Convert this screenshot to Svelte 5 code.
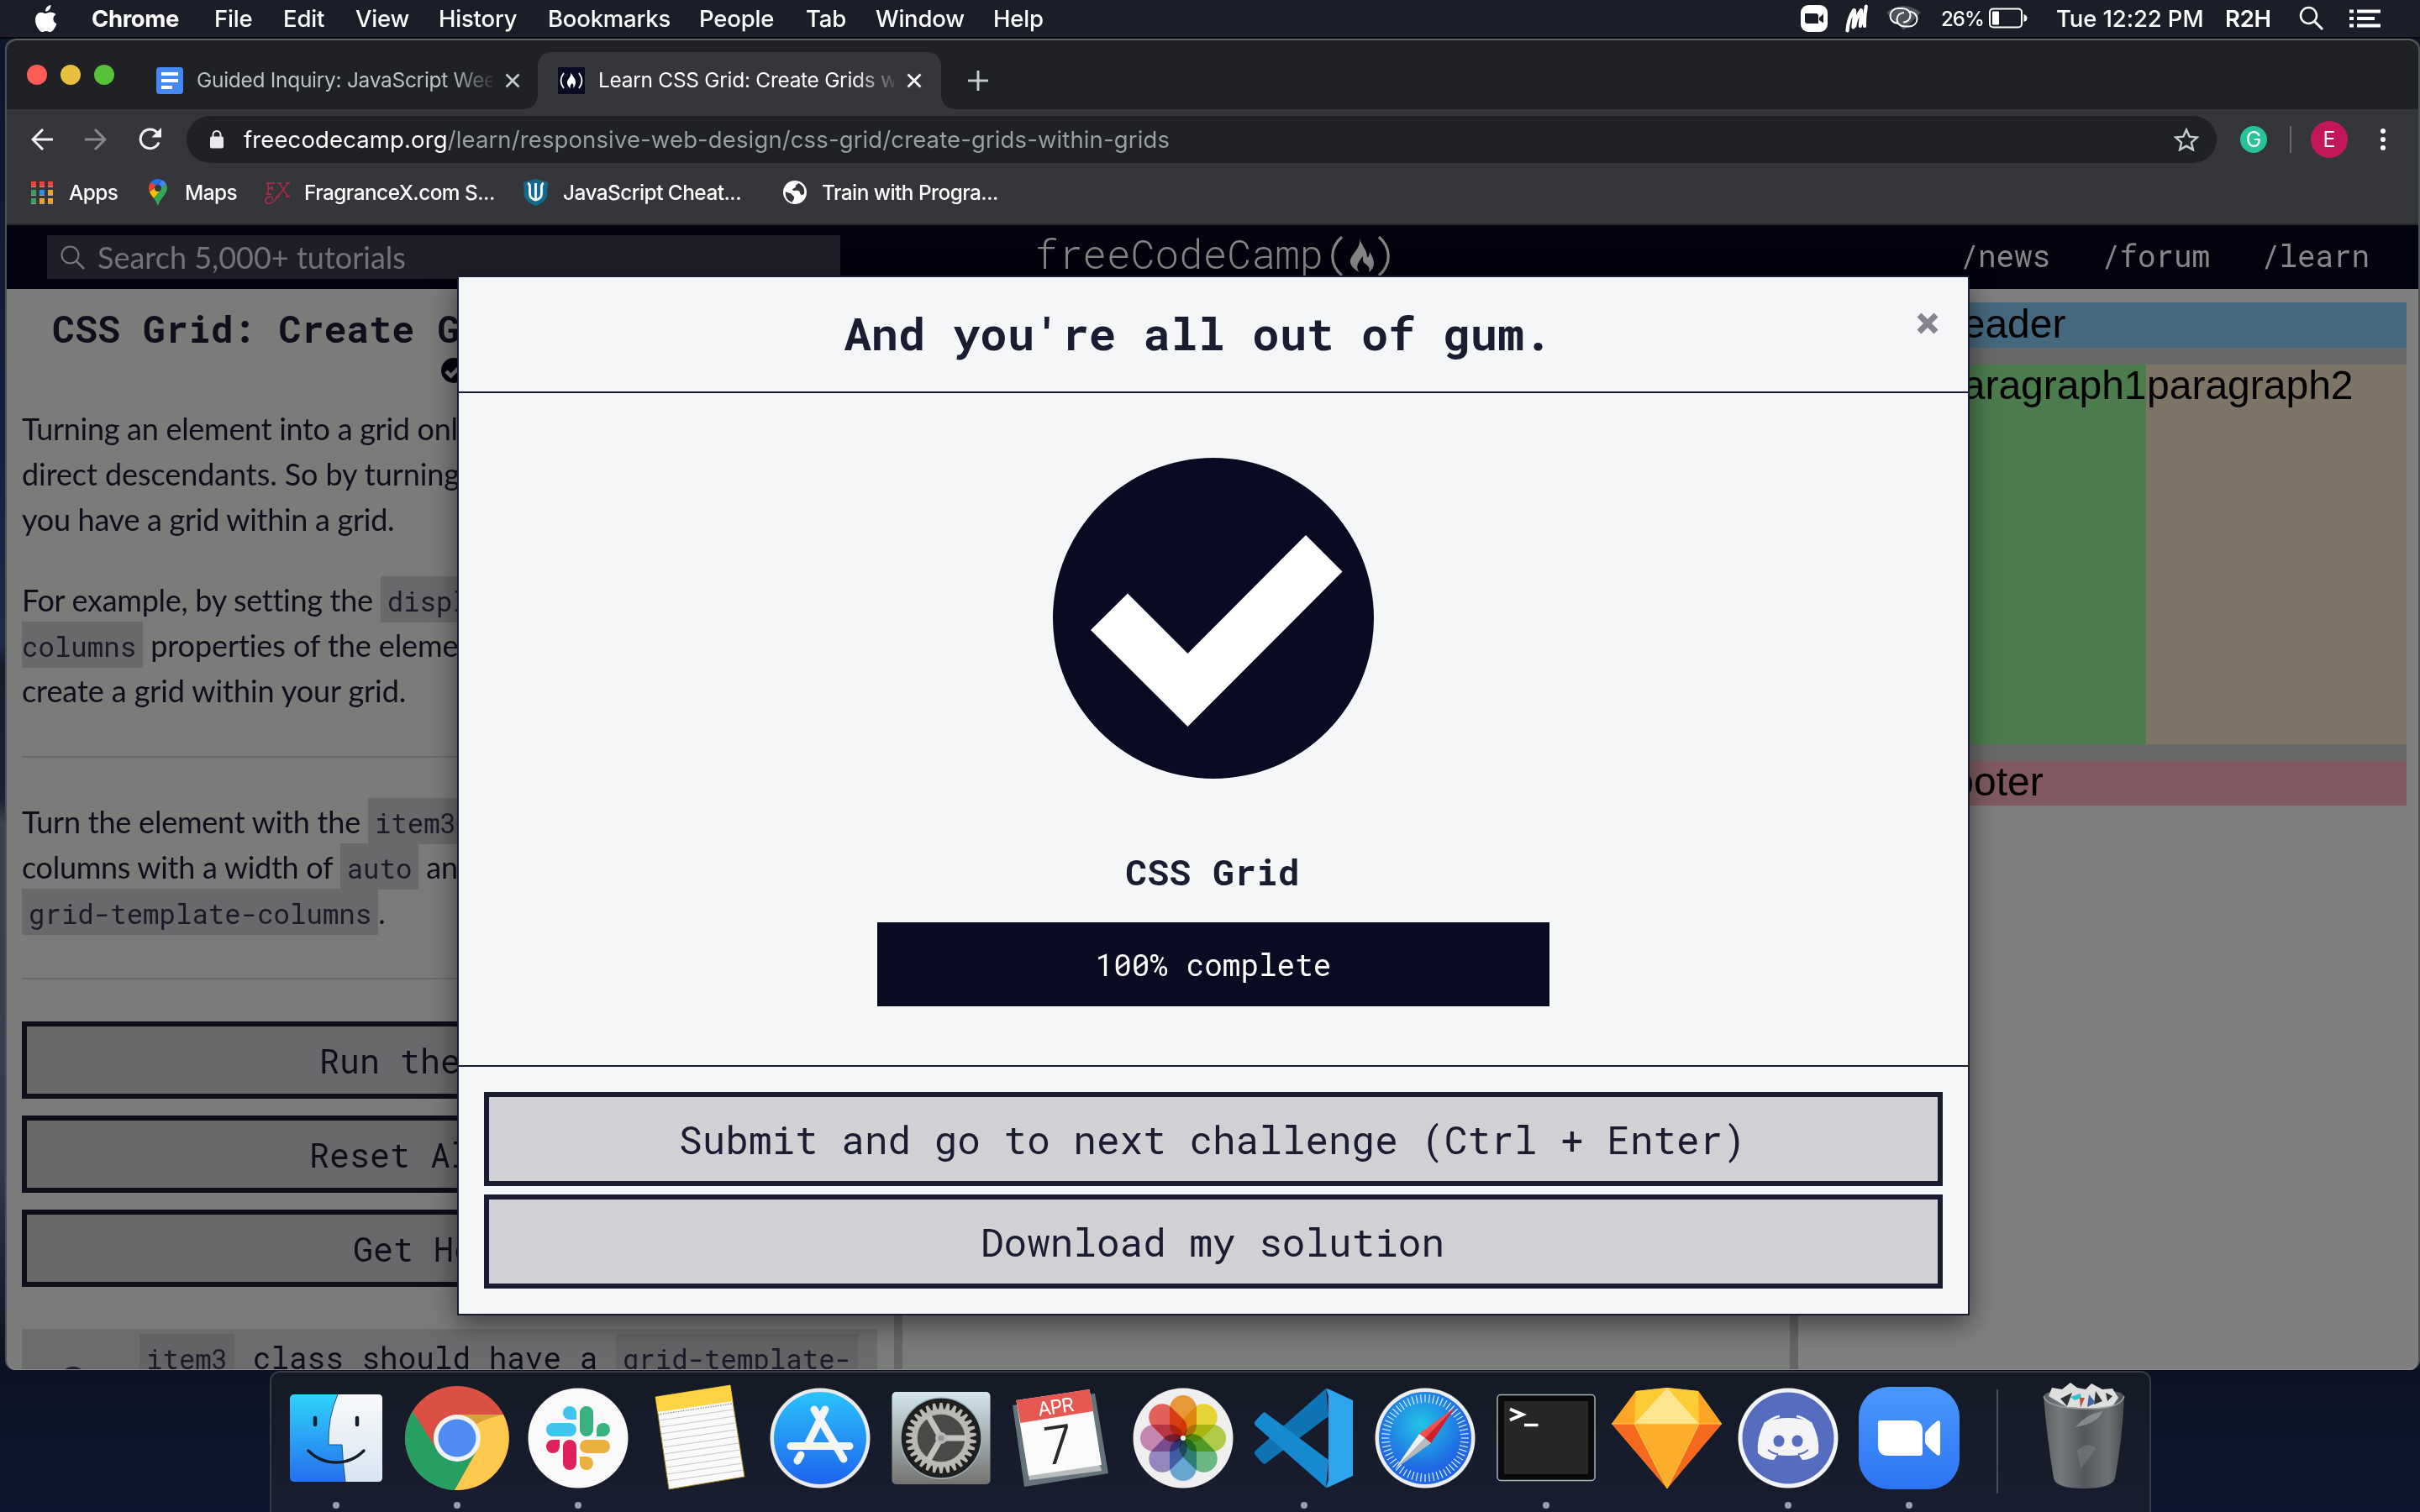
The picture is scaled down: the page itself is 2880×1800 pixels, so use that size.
<script>
  const menus = ['File', 'Edit', 'View', 'History', 'Bookmarks', 'People', 'Tab', 'Window', 'Help'];
  const gearTeeth = Array.from({ length: 30 }, (_, i) => i * 12);
  const ticks = Array.from({ length: 60 }, (_, i) => ({ angle: i * 6, len: i % 5 === 0 ? 9 : 10 }));
  const noteLines = [0, 1, 2, 3, 4, 5, 6, 7, 8, 9];
  const petals = [
    { angle: 0, color: '#f7a23b' },
    { angle: 45, color: '#f6e13a' },
    { angle: 90, color: '#bcd84f' },
    { angle: 135, color: '#72c28c' },
    { angle: 180, color: '#6fb1e0' },
    { angle: 225, color: '#9f8fca' },
    { angle: 270, color: '#cf8fbd' },
    { angle: 315, color: '#f0665e' }
  ];
  const appDots = [
    ['#f44336', '#f44336', '#f44336'],
    ['#3a9f5c', '#2b8df0', '#f0a024'],
    ['#3a9f5c', '#f0a024', '#f0a024']
  ];
  const dock = [
    { name: 'finder', running: true },
    { name: 'chrome', running: true },
    { name: 'slack', running: true },
    { name: 'notes', running: false },
    { name: 'appstore', running: false },
    { name: 'settings', running: false },
    { name: 'calendar', running: false },
    { name: 'photos', running: false },
    { name: 'vscode', running: true },
    { name: 'safari', running: false },
    { name: 'terminal', running: true },
    { name: 'sketch', running: false },
    { name: 'discord', running: true },
    { name: 'zoom', running: true }
  ];
</script>

<div class="desktop">
  <header class="menubar">
    <svg class="apple" viewBox="0 0 28 34"><path d="M20.500 1c.2 2-.6 3.900-1.700 5.300-1.200 1.400-3 2.400-4.700 2.300-.2-1.900.7-3.900 1.800-5.100C17.100 2.100 19 1.100 20.500 1zM26.500 12.300c-1.900 1.200-3.100 3-3.100 5.300 0 2.700 1.600 4.800 4 5.700-.8 2.600-2.100 5-3.800 7.200-1.100 1.500-2.300 2.500-3.900 2.500-1.700 0-2.400-1.100-4.700-1.100s-3.100 1.100-4.800 1.100c-1.600 0-2.900-1.200-4.100-2.900C3.600 26.700 2 22.800 2 18.700c0-5.700 3.500-9 7.200-9 2 0 3.800 1.400 5.100 1.400 1.200 0 3.300-1.500 5.800-1.500 2.500.1 4.900 1 6.400 2.700z" fill="#fff"/></svg>
    <b>Chrome</b>
    {#each menus as m}<span>{m}</span>{/each}
    <div class="status">
      <svg width="32" height="32" viewBox="0 0 32 32"><rect width="32" height="32" rx="9" fill="#fff"/><path d="M5 10h13q3 0 3 3v9H8q-3 0-3-3zM22 15l5-4.500v11L22 18z" fill="#1b1e29"/></svg>
      <svg width="30" height="36" viewBox="0 0 30 36"><path d="M3.500 32.500Q4.500 18 11 8.500 12.500 7 12 12L10.500 28.500 M12.200 27Q14 16 19.500 8.500 20.500 7 20 12L18.800 27 M20 24Q25 15 25.800 3.500Q23.500 18 24 27" fill="none" stroke="#fff" stroke-width="4.200" stroke-linecap="round" stroke-linejoin="round"/></svg>
      <svg width="42" height="32" viewBox="0 0 42 32"><path d="M0 9Q20 -7 41 9L20.500 30z" fill="#50535c"/><g fill="none" stroke="#fff" stroke-width="2"><path d="M15 22C8 22 4.500 17 4.500 13 4.500 8 8.500 4 14 4h5c6 0 9.500 4 9.500 8.500 0 4.500-4 8-8.500 8"/><path d="M26 7.500c6 0 10.500 4 10.500 9 0 5-4 9-9.500 9h-5c-6 0-9.500-4-9.500-8.500 0-4.500 4-8 8.500-8"/></g></svg>
      <span class="pct">26%</span>
      <svg width="46" height="26" viewBox="0 0 46 26"><rect x="1" y="1.500" width="38" height="22" rx="4" fill="none" stroke="#fff" stroke-width="2"/><rect x="4" y="4.500" width="8" height="16" rx="1" fill="#fff"/><path d="M41.500 8q4 1 4 4.500t-4 4.500z" fill="#fff"/></svg>
      <span class="clock">Tue 12:22 PM</span>
      <span class="user">R2H</span>
      <svg width="30" height="30" viewBox="0 0 30 30"><circle cx="11.500" cy="11.500" r="9.500" fill="none" stroke="#fff" stroke-width="2.500"/><path d="M18.500 18.500L28 28" stroke="#fff" stroke-width="3"/></svg>
      <svg width="37" height="22" viewBox="0 0 37 22"><path d="M0 2.500h5M9 2.500h28M0 11h5M9 11h21M0 19.500h5M9 19.500h28" stroke="#fff" stroke-width="4"/></svg>
    </div>
  </header>

  <section class="window">
    <div class="tabstrip">
      <div class="lights"><i class="red"></i><i class="yellow"></i><i class="green"></i></div>
      <div class="tab idle">
        <svg width="32" height="32" viewBox="0 0 32 32"><rect width="32" height="32" rx="4" fill="#4688f4"/><path d="M6 8h20M6 16h20M6 24h13" stroke="#fff" stroke-width="4"/></svg>
        <span class="tabtext">Guided Inquiry: JavaScript Wee</span>
        <svg class="x" viewBox="0 0 18 18"><path d="M1.500 1.500l15 15M16.500 1.500l-15 15" stroke="#c5c8cc" stroke-width="2.800"/></svg>
      </div>
      <div class="tab active">
        <svg width="32" height="32" viewBox="0 0 32 32"><rect width="32" height="32" fill="#0a0a23"/><path d="M7 7q-7 9 0 18M25 7q7 9 0 18" fill="none" stroke="#fff" stroke-width="1.800"/><path d="M15.500 6c2 6 5.500 7 5.500 12 0 3-1 5-3 7 1-3 0-5-1-6-2 2-3 3-2 6-3-2-4-4-4-7 0-4 5-6 4.500-12z" fill="#fff"/></svg>
        <span class="tabtext">Learn CSS Grid: Create Grids w</span>
        <svg class="x" viewBox="0 0 18 18"><path d="M1.500 1.500l15 15M16.500 1.500l-15 15" stroke="#fff" stroke-width="2.800"/></svg>
      </div>
      <svg class="plus" viewBox="0 0 24 24"><path d="M12 0v24M0 12h24" stroke="#c5c8cc" stroke-width="3"/></svg>
    </div>

    <div class="toolbar">
      <svg class="nav" viewBox="0 0 26 26"><path d="M26 13H2M14 1L2 13l12 12" fill="none" stroke="#f1f3f4" stroke-width="3"/></svg>
      <svg class="nav" viewBox="0 0 26 26"><path d="M0 13h24M12 1l12 12-12 12" fill="none" stroke="#87898c" stroke-width="3"/></svg>
      <svg class="nav reload" viewBox="0 0 28 28"><path d="M24 17.500A11.300 11.300 0 1 1 22 6" fill="none" stroke="#f1f3f4" stroke-width="3"/><path d="M27 0v11.500H15.500z" fill="#f1f3f4"/></svg>
      <div class="omnibox">
        <svg class="lock" viewBox="0 0 16 22"><path d="M3.500 9V5.500a4.500 4.500 0 0 1 9 0V9" fill="none" stroke="#e8eaed" stroke-width="2"/><rect y="7.500" width="16" height="14" rx="2" fill="#e8eaed"/></svg>
        <span class="url"><em>freecodecamp.org</em>/learn/responsive-web-design/css-grid/create-grids-within-grids</span>
        <svg class="star" viewBox="0 0 30 28"><path d="M15 2.500l3.700 8.200 9 .9-6.800 6 2 8.800L15 21.800l-7.900 4.600 2-8.800-6.800-6 9-.9z" fill="none" stroke="#c5c8cc" stroke-width="2.500"/></svg>
      </div>
      <div class="grammarly">G</div>
      <div class="sep"></div>
      <div class="avatar">E</div>
      <svg class="dots" viewBox="0 0 6 26"><circle cx="3" cy="3" r="3" fill="#fff"/><circle cx="3" cy="13" r="3" fill="#fff"/><circle cx="3" cy="23" r="3" fill="#fff"/></svg>
    </div>

    <div class="bookmarks">
      <svg width="26" height="27" viewBox="0 0 26 27">
        {#each appDots as row, r}{#each row as c, i}<rect x={i * 10} y={r * 10} width="6" height="6" fill={c}/><rect x={i * 10} y={r * 10 + 6} width="6" height="1" fill="#a0a0a0"/>{/each}{/each}
      </svg>
      <span>Apps</span>
      <svg class="pin" width="22" height="32" viewBox="0 0 22 32"><path d="M11 0A11 11 0 0 0 2.600 4L8 9l8-7.500A11 11 0 0 0 11 0z" fill="#1a73e8"/><path d="M16 1.200L8 11l7 1 6-6a11 11 0 0 0-5-4.800z" fill="#4285f4"/><path d="M2.600 4A11 11 0 0 0 1 15.500L9 8z" fill="#ea4335"/><path d="M1 15.500c1 2.500 3 5 5 7.500L17 12 9 9z" fill="#fbbc04"/><path d="M21 6c2 5 1 9-3 14-3 4-5 6-7 12-2-5-3-6-5-9L18 8z" fill="#34a853"/><circle cx="11" cy="11" r="4" fill="#35363a"/></svg>
      <span>Maps</span>
      <svg width="32" height="27" viewBox="0 0 32 27"><path d="M3 2h10M5 2v13M2.500 15h6M5 8h6M10 5.500v5M16 2h5M26 2h5M14 18h5M26 18h5M18.500 2l10 16M29 2L15 20C9 29 1 27 2 22c1-5 10-5 8 0" fill="none" stroke="#a02c48" stroke-width="1.800"/></svg>
      <span>FragranceX.com S...</span>
      <svg width="31" height="32" viewBox="0 0 31 32"><path d="M15.500 0L30 4l-1 17q-4 8-13.500 11Q6 29 2 21L1 4z" fill="#14698e"/><path d="M6 5q2.500 1 2.500 4v8q0 7 7 8 7-1 7-8V9q0-3 2.500-4M15.500 5v20" fill="none" stroke="#fff" stroke-width="2.800"/></svg>
      <span>JavaScript Cheat...</span>
      <svg width="30" height="30" viewBox="0 0 30 30"><circle cx="15" cy="15" r="14" fill="#fff"/><path d="M4 14c2 2 5 1 7 3 1 2 4 2 3 5 0 2-2 2-2 5-6-2-9-7-8-13zM19 4c-1 2-4 2-3 4 0 2-4 2-4 4 2 2 5 0 7 1 3 1 1 4 4 5 2 0 3-1 3-2 1-6-2-10-7-12z" fill="#35363a"/></svg>
      <span>Train with Progra...</span>
    </div>

    <nav class="site">
      <div class="search">
        <svg width="29" height="29" viewBox="0 0 29 29"><circle cx="11.500" cy="11.500" r="10" fill="none" stroke="#77777b" stroke-width="2"/><path d="M19 19l9 9" stroke="#77777b" stroke-width="2.500"/></svg>
        <span>Search 5,000+ tutorials</span>
      </div>
      <div class="logo">
        <span>freeCodeCamp</span>
        <svg width="74" height="48" viewBox="0 0 74 48"><path d="M16 1C1 14 1 34 16 47M60 1c15 13 15 33 0 46" fill="none" stroke="#858585" stroke-width="3.200"/><path d="M37 3c2 8 9 13 9 22q2 1 3-6c3 5 5 9 5 14 0 4-3 8-6 10 1-4 1-6-4-10-4-2-3-6-3-9-5 6-10 13-4 19-6-3-12-8-11-14 1-7 13-15 11-26z" fill="#858585"/></svg>
      </div>
      <div class="links"><span>/news</span><span>/forum</span><span>/learn</span></div>
    </nav>

    <main class="page">
      <section class="lesson">
        <h1>CSS Grid: Create Grids within</h1>
        <svg class="done" viewBox="0 0 30 30"><circle cx="15" cy="15" r="15" fill="#05050f"/><path d="M6 16l5.500 5.500L23 10" fill="none" stroke="#7b7d7b" stroke-width="4.500"/></svg>
        <div class="para">
          <p class="tight">Turning an element into a grid only</p>
          <p>direct descendants. So by turning a</p>
          <p class="tight">you have a grid within a grid.</p>
        </div>
        <div class="para">
          <p class="tight">For example, by setting the <code>display</code></p>
          <p><code class="cont">columns</code> properties of the element</p>
          <p>create a grid within your grid.</p>
        </div>
        <hr />
        <div class="para">
          <p class="snug">Turn the element with the <code>item3</code></p>
          <p class="tight">columns with a width of <code>auto</code> and</p>
          <p><code>grid-template-columns</code>.</p>
        </div>
        <hr />
        <div class="actions">
          <div class="btn">Run the Tests</div>
          <div class="btn">Reset All Code</div>
          <div class="btn help">Get Help</div>
        </div>
        <div class="result">
          <svg width="34" height="34" viewBox="0 0 34 34"><circle cx="17" cy="17" r="17" fill="#1c1c28"/></svg>
          <p><code>item3</code> class should have a <code>grid-template-</code></p>
        </div>
      </section>
      <div class="gutter"></div>
      <section class="editor"></section>
      <div class="gutter"></div>
      <section class="preview">
        <div class="grid">
          <div class="cell head"><span>header</span></div>
          <div class="cell p1"><span>paragraph1</span></div>
          <div class="cell p2"><span>paragraph2</span></div>
          <div class="cell foot"><span>footer</span></div>
        </div>
      </section>
    </main>

    <div class="modal">
      <div class="mhead">
        <h2>And you're all out of gum.</h2>
        <svg viewBox="0 0 26 26"><path d="M3 3l20 20M23 3L3 23" stroke="#858591" stroke-width="7"/></svg>
      </div>
      <div class="mbody">
        <svg class="check" viewBox="0 0 382 382"><circle cx="191" cy="191" r="191" fill="#0a0a23"/><path d="M45 205l44-43.500L160.500 233 301 92l43.500 43.500L160.500 320z" fill="#fff"/></svg>
        <h3>CSS Grid</h3>
        <div class="progress">100% complete</div>
      </div>
      <div class="mfoot">
        <div class="mbtn">Submit and go to next challenge (Ctrl + Enter)</div>
        <div class="mbtn">Download my solution</div>
      </div>
    </div>
  </section>

  <footer class="dock">
    {#each dock as app}
      <div class="slot">
        <svg viewBox="-72 -72 144 144">
          {#if app.name === 'finder'}
            <defs>
              <linearGradient id="fa" x2="0" y2="1"><stop stop-color="#2fd3fb"/><stop offset="1" stop-color="#2470ee"/></linearGradient>
              <linearGradient id="fb" x2="0" y2="1"><stop stop-color="#f8f8f9"/><stop offset="1" stop-color="#d8e6f3"/></linearGradient>
            </defs>
            <rect x="-55" y="-52" width="110" height="104" rx="5" fill="url(#fa)"/>
            <path d="M2 -52H50q5 0 5 5V47q0 5 -5 5H11Q8 30 7 8H-9Q-10 -25 2 -52z" fill="url(#fb)"/>
            <path d="M2 -52Q-10 -25 -9 8H7Q8 30 11 52" fill="none" stroke="#1d4f91" stroke-width="1"/>
            <path d="M-25 -24v8M25 -24v8" stroke="#16202c" stroke-width="4.500" stroke-linecap="round"/>
            <path d="M-33 15Q-19 29 0 29T33 15" fill="none" stroke="#16202c" stroke-width="3.500" stroke-linecap="round"/>
          {:else if app.name === 'chrome'}
            <circle r="62" fill="#dc4f44"/>
            <path d="M-53 -32A62 62 0 0 0 -3 62L24 14 -24 14z" fill="#26a062"/>
            <path d="M55 -28A62 62 0 0 1 -3 62L24 14 12 -28z" fill="#fdca4e"/>
            <path d="M0 -28H55Q35 -24 20 -15z" fill="#d9a03c"/>
            <circle r="28" fill="#f3f3f3"/><circle r="22.500" fill="#4f8df2"/>
          {:else if app.name === 'slack'}
            <circle r="59.500" fill="#f9f9f9"/>
            <g fill="#3fc4ee"><rect x="-38" y="-18" width="36" height="16" rx="8"/><path d="M-2 -22h-8a8 8 0 1 1 8 -8z"/></g>
            <g fill="#38b37e"><rect x="2" y="-38" width="16" height="36" rx="8"/><path d="M22 -2v-8a8 8 0 1 1 8 8z"/></g>
            <g fill="#e9b03d"><rect x="2" y="2" width="36" height="16" rx="8"/><path d="M2 22h8a8 8 0 1 1 -8 8z"/></g>
            <g fill="#de215b"><rect x="-18" y="2" width="16" height="36" rx="8"/><path d="M-22 2v8a8 8 0 1 1 -8 -8z"/></g>
          {:else if app.name === 'notes'}
            <path d="M-52 -49L37 -63 54 46 -36 61z" fill="#fafafa" stroke="#a5821c" stroke-width="1"/>
            <path d="M-52 -49L37 -63 40 -44 -49 -31z" fill="#fdd344"/>
            <path d="M-49 -28L40 -41" stroke="#8a8a80" stroke-width="1.200" stroke-dasharray="1.500 1.500"/>
            {#each noteLines as n}<path d="M{-48 + n * 1.2} {-21 + n * 8}L{41 + n * 1.3} {-34 + n * 8}" stroke="#c6c6c6" stroke-width="1.100"/>{/each}
          {:else if app.name === 'appstore'}
            <defs><linearGradient id="as" x2="0" y2="1"><stop stop-color="#2ac3fb"/><stop offset="1" stop-color="#1d63ee"/></linearGradient></defs>
            <circle r="59.500" fill="#e9eaec"/><circle r="55" fill="url(#as)"/>
            <path d="M6 -34L-15 8M-7 -34L28 25M-35 9.500H35M-23 20l-4 7" stroke="#f3f5f8" stroke-width="9" stroke-linecap="round"/>
          {:else if app.name === 'settings'}
            <defs><linearGradient id="sp" x2="0" y2="1"><stop stop-color="#d3e7ee"/><stop offset="1" stop-color="#757371"/></linearGradient></defs>
            <rect x="-58.500" y="-55" width="117" height="110" rx="5" fill="url(#sp)"/>
            <circle r="48" fill="#1f1f1f" stroke="#9db4c4" stroke-width="1.500"/>
            <g fill="#bab8b5">{#each gearTeeth as a}<path d="M-3 -34L-1.500 -42h3L3 -34z" transform="rotate({a})"/>{/each}</g>
            <circle r="31.500" fill="#4a4a49" stroke="#bab8b5" stroke-width="6.500"/>
            <g stroke="#c4c2bf" stroke-width="7"><path d="M0 0H30"/><path d="M0 0H30" transform="rotate(120)"/><path d="M0 0H30" transform="rotate(240)"/></g>
            <circle r="7" fill="#bab8b5"/><circle r="3.500" fill="#8b9299"/>
          {:else if app.name === 'calendar'}
            <path d="M-59 -39L39 -53 55 42 -45 58z" fill="#65737b"/>
            <path d="M-53 -37L46 34 47 39 -39 50z" fill="#b9bcbd"/>
            <path d="M-54.600 -45L32.600 -58 47 32 -40 45z" fill="#fbfbfb"/>
            <path d="M-54.600 -45L32.600 -58 37 -32 -49.500 -18z" fill="#e75853"/>
            <text x="-8" y="-29" transform="rotate(-8.500 -9 -38)" class="month">APR</text>
            <text x="-4" y="30" transform="rotate(-8.500 -4 8)" class="day">7</text>
          {:else if app.name === 'photos'}
            <circle r="59.500" fill="#efefef"/>
            <g class="petals">{#each petals as p}<rect x="-16" y="-51" width="32" height="51" rx="16" fill={p.color} transform="rotate({p.angle})"/>{/each}</g>
            <circle r="3" fill="#fff"/>
          {:else if app.name === 'vscode'}
            <path d="M26 -59L29 -26 -47 31Q-49 31 -59 19 -59 16 -58 15z" fill="#0f74b4"/>
            <path d="M-47 -31Q-49 -31 -59 -19 -59 -16 -58 -15L26 59 29 26z" fill="#1789d1"/>
            <path d="M26 -59L30 -58 58 -45V45L30 58 26 59 29 50V-50z" fill="#2ea3ee"/>
          {:else if app.name === 'safari'}
            <defs><radialGradient id="sf" cx=".45" cy=".35"><stop stop-color="#23c5e6"/><stop offset="1" stop-color="#1f67e4"/></radialGradient></defs>
            <circle r="59.500" fill="#edeef0"/><circle r="55" fill="url(#sf)"/>
            {#each ticks as t}<path d="M0 -52v{t.len}" transform="rotate({t.angle})" stroke="#cfe6fa" stroke-width="1.300"/>{/each}
            <path d="M36 -37L-7 -5 0 0z" fill="#fb4c4f"/><path d="M36 -37L7 6 0 0z" fill="#d01f2a"/>
            <path d="M-36 37L-7 -5 0 0z" fill="#f1f1f1"/><path d="M-36 37L7 6 0 0z" fill="#b9babc"/>
          {:else if app.name === 'terminal'}
            <rect x="-58" y="-51.500" width="116" height="102" rx="4" fill="#0a0a0a" stroke="#a9b6b9" stroke-width="1.500"/>
            <rect x="-50" y="-44" width="100" height="87" fill="#272727"/>
            <path d="M-43 -34.500L-28 -28 -43 -21.500" fill="none" stroke="#fff" stroke-width="4"/><path d="M-26 -15.500h16.500" stroke="#fff" stroke-width="3.500"/>
          {:else if app.name === 'sketch'}
            <path d="M-66 -17L-37 -56 0 -60 37 -56 65 -17 0 60z" fill="#fdad2c"/>
            <path d="M-66 -17L-37 -56 -39 -17zM65 -17L37 -56 38 -17z" fill="#fca527"/>
            <path d="M-66 -17H-39L0 60zM65 -17H38L0 60z" fill="#f4681f"/>
            <path d="M-37 -56L0 -60 -39 -17zM37 -56L0 -60 38 -17z" fill="#fdcb34"/>
            <path d="M0 -60L-39 -17H38z" fill="#fde68f"/>
            <path d="M-66 -17H65M-39 -17L0 60 38 -17" fill="none" stroke="#fdd247" stroke-width="1"/>
          {:else if app.name === 'discord'}
            <circle r="59.500" fill="#f4f5f8"/><circle r="54.500" fill="#566cbe"/>
            <path d="M-28 -19Q-14 -24 0 -24T28 -19Q38 0 36 18 28 26 17 26L13 20Q-0 22 -13 20L-17 26Q-28 26 -36 18 -38 0 -28 -19z" fill="#f4f4f6"/>
            <path d="M-25 -19Q-17 -25 -10 -26M25 -19Q17 -25 10 -26" stroke="#f4f4f6" stroke-width="2.500" fill="none"/>
            <path d="M-24 14Q-18 19 -12 19M24 14Q18 19 12 19" stroke="#566cbe" stroke-width="2" fill="none"/>
            <ellipse cx="-11" cy="3.500" rx="6.500" ry="7" fill="#566cbe"/><ellipse cx="11" cy="3.500" rx="6.500" ry="7" fill="#566cbe"/>
          {:else}
            <defs><linearGradient id="zm" x2="0" y2="1"><stop stop-color="#4a98fc"/><stop offset="1" stop-color="#2d74f5"/></linearGradient></defs>
            <rect x="-60" y="-61" width="120" height="122" rx="36" fill="url(#zm)"/>
            <path d="M-34 -21H4Q16 -21 16 -9V18Q16 21 13 21H-25Q-37 21 -37 9V-18Q-37 -21 -34 -21z" fill="#fff"/>
            <path d="M19 -6Q24 -13 33 -20 37 -22 37 -18V18Q37 22 33 20 24 13 19 6z" fill="#fff"/>
          {/if}
        </svg>
        {#if app.running}<i></i>{/if}
      </div>
    {/each}
    <div class="divider"></div>
    <div class="slot">
      <svg viewBox="-72 -72 144 144">
        <defs><linearGradient id="tr"><stop stop-color="#5b5e60"/><stop offset=".2" stop-color="#777a7c"/><stop offset=".5" stop-color="#55585a"/><stop offset=".8" stop-color="#6f7274"/><stop offset="1" stop-color="#4a4d4f"/></linearGradient></defs>
        <path d="M-48 -50Q-46 -58 0 -58T48 -50Q46 0 37 48 33 60 0 60T-36 48Q-44 0 -48 -50z" fill="url(#tr)"/>
        <path d="M-42 -50L-38 -60 -26 -58 -16 -66 -8 -60 2 -58 9 -65 22 -58 34 -59 41 -48 34 -38 10 -35 -20 -37z" fill="#dedede"/>
        <path d="M-28 -47L-14 -54 -20 -38zM14 -56L22 -44 12 -40zM26 -54l8 4-6 6z" fill="#2d3336"/>
        <path d="M-16 -49l12 -4 1 5-8 3z" fill="#2fc1d0"/><path d="M-5 -48l6 0-5 12z" fill="#b9533b"/><path d="M6 -52l8 10-10 5z" fill="#47659e"/>
        <path d="M-48 -50Q-44 -36 0 -35T48 -50" fill="none" stroke="#9b9d9e" stroke-width="1.500"/>
        <path d="M22 -32Q18 -18 -10 -13 2 -28 22 -32z" fill="#a5a8a9" opacity=".6"/>
        <path d="M-8 14Q6 4 14 12 6 26 -4 36z" fill="#8a8d8f" opacity=".4"/>
      </svg>
    </div>
  </footer>
</div>

<style>
  :global(body) { margin: 0; overflow: hidden; }
  * { box-sizing: border-box; }
  h1, h2, h3, p { margin: 0; }
  svg { flex: none; display: block; }
  .desktop {
    position: relative; width: 2880px; height: 1800px; overflow: hidden;
    font-family: Inter, "Liberation Sans", sans-serif;
    background: linear-gradient(180deg, #0b1526 0, #12203a 500px, #1e2c44 770px, #141c2c 790px, #1b2233 950px, #3a4150 980px, #333b4c 1380px, #0b1222 1620px, #0d1830 1800px);
  }

  .menubar {
    height: 46px; padding: 0 0 0 40px; border-bottom: 2px solid #04080f; background: #1b1e29; color: #fff;
    display: grid; align-items: center; font-size: 27.500px; font-weight: 500; letter-spacing: -0.2px; white-space: nowrap;
    grid-template-columns: 69px 146px 82px 86px 99px 130px 180px 127px 83px 140px 961px 1fr;
  }
  .menubar b { font-weight: 700; letter-spacing: -0.4px; }
  .apple { width: 28px; height: 34px; }
  .status { display: flex; align-items: center; }
  .pct { width: 57px; margin-left: 23px; font-size: 24px; letter-spacing: -1px; }
  .status svg:nth-of-type(2) { margin: 0 20px; }
  .clock { width: 201px; margin-left: 34px; letter-spacing: -0.1px; }
  .user { width: 88px; font-weight: 600; letter-spacing: -0.3px; }
  .status svg:last-child { margin-left: 30px; }

  .window {
    position: absolute; left: 6px; top: 46px; width: 2874px; height: 1585px; overflow: hidden;
    border: solid #4e5153; border-width: 0 2px; border-radius: 12px; background: #35363a;
  }
  .window::after {
    content: ""; position: absolute; inset: 0; border-radius: 12px; pointer-events: none;
    box-shadow: inset 0 2px 0 #5f6163, inset 0 -1px 0 #8a8a8a;
  }

  .tabstrip { height: 84px; padding-top: 16px; background: #202124; display: flex; }
  .lights { width: 162px; padding: 15px 0 0 24px; display: flex; gap: 16px; }
  .lights i { width: 24px; height: 24px; border-radius: 50%; }
  .red { background: #ff5b57; } .yellow { background: #e6bf3c; } .green { background: #58c038; }
  .tab { height: 68px; display: flex; align-items: center; font-size: 24.500px; letter-spacing: -0.3px; white-space: nowrap; }
  .tabtext { padding-bottom: 2px; mask-image: linear-gradient(90deg, #000 86%, transparent 102%); }
  .x { width: 18px; height: 18px; }
  .idle { width: 470px; padding-left: 16px; color: #bdc1c6; }
  .idle .tabtext { margin-left: 16px; width: 352px; }
  .idle .x { margin-left: 15px; }
  .active {
    position: relative; width: 480px; padding-left: 24px; color: #fff; background: #35363a; border-radius: 16px 16px 0 0;
  }
  .active::before, .active::after { content: ""; position: absolute; bottom: 0; width: 16px; height: 16px; }
  .active::before { left: -16px; background: radial-gradient(circle at 0 0, transparent 15.500px, #35363a 16px); }
  .active::after { right: -16px; background: radial-gradient(circle at 100% 0, transparent 15.500px, #35363a 16px); }
  .active .tabtext { margin-left: 16px; width: 352px; }
  .active .x { margin-left: 15px; }
  .plus { width: 24px; height: 24px; margin: 22px 0 0 32px; }

  .toolbar { height: 72px; padding: 0 0 0 29px; display: flex; align-items: center; }
  .nav { width: 26px; height: 26px; margin-right: 38px; }
  .reload { width: 28px; height: 28px; margin: 0 29px 0 0; }
  .omnibox { height: 56px; width: 2416px; padding-left: 28px; border-radius: 28px; background: #202124; display: flex; align-items: center; }
  .lock { width: 16px; height: 22px; }
  .url { margin-left: 24px; width: 2297px; font-size: 27.500px; color: #9a9da1; white-space: nowrap; letter-spacing: 0.12px; }
  .url em { font-style: normal; color: #fff; }
  .star { width: 30px; height: 28px; margin-right: 21px; }
  .grammarly { width: 32px; height: 32px; margin-left: 28px; border-radius: 50%; background: #26c29a; color: #fff; font-size: 25px; line-height: 32px; text-align: center; }
  .sep { width: 2px; height: 32px; margin: 0 23px 0 27px; background: #65676b; }
  .avatar { width: 44px; height: 44px; border-radius: 50%; background: #c2185b; color: #fff; font-size: 25px; line-height: 44px; text-align: center; }
  .dots { width: 6px; height: 26px; margin-left: 39px; }

  .bookmarks {
    height: 66px; padding: 0 0 10px 29px; display: grid; align-items: center; color: #fff; border-bottom: 2px solid #26272a;
    grid-template-columns: 45px 95px 43px 94px 48px 260px 48px 261px 47px 300px; font-size: 24.400px; font-weight: 500; letter-spacing: -0.54px; white-space: nowrap;
  }

  .site { height: 76px; padding: 0 58px 0 48px; background: #03030f; display: flex; align-items: flex-start; }
  .search {
    width: 944px; height: 52px; margin-top: 12px; padding-left: 16px; background: #1e1e28; display: flex; align-items: center;
    font: 36px Lato, sans-serif; color: #737377; gap: 15px;
  }
  .logo { margin: 9px 0 0 231px; width: 434px; display: flex; align-items: flex-start; font: 300 47.800px "Roboto Mono", "Liberation Mono", monospace; color: #858585; line-height: 50px; }
  .logo span { width: 350px; }
  .logo svg { margin-top: 4px; }
  .links { margin-left: auto; padding-top: 14px; display: flex; gap: 61px; font: 36px "Roboto Mono", "DejaVu Sans Mono", monospace; line-height: 44px; color: #87878a; letter-spacing: -0.1px; }

  .page { height: 1287px; display: grid; grid-template-columns: 1056px 10px 1056px 10px 1fr; background: #7a7c7a; color: #0f0f1b; }
  .gutter { background: #656567; }
  .lesson { height: 1287px; padding: 0 20px 0 18px; overflow: hidden; white-space: nowrap; }
  .lesson h1 { margin: 19px 0 0 36px; font: 700 45px "Roboto Mono", "DejaVu Sans Mono", monospace; letter-spacing: -0.05px; line-height: 56px; }
  .done { width: 30px; height: 30px; margin: 7px 0 27px 499px; }
  .para { padding-bottom: 42px; }
  .para p { height: 54px; font: 36px Lato, sans-serif; line-height: 54px; letter-spacing: -0.08px; }
  .para .tight { letter-spacing: -0.29px; }
  .para .snug { letter-spacing: -0.23px; }
  .para code { letter-spacing: 0; }
  code { padding: 8px 8px 4px; background: #69686a; color: #1a1a28; font: 32.400px "Roboto Mono", "DejaVu Sans Mono", monospace; line-height: 1; }
  .para .cont { padding-left: 0; }
  .cont { padding-right: 8px; }
  hr { height: 2px; border: 0; margin: 9px 0 49px; background: #696b6a; }
  .actions { display: grid; gap: 20px; margin: 50px 0; }
  .btn {
    height: 92px; border: 6px solid #0f0f1b; background: #69686a; display: flex; align-items: center; justify-content: center;
    font: 40px "Roboto Mono", "DejaVu Sans Mono", monospace; padding: 1px 0 0 2px;
  }
  .help { padding-right: 40px; }
  .result { height: 80px; padding-left: 44px; background: #6c6c6e; display: flex; }
  .result svg { margin-top: 45px; }
  .result p { margin: 9px 0 0 62px; font: 36px "Roboto Mono", "DejaVu Sans Mono", monospace; line-height: 50px; }
  .result code { background: #636365; }

  .preview { padding: 16px 14px 0 16px; background: #7f7f7f; font: 48px "Liberation Sans", sans-serif; color: #000; }
  .grid { height: 600px; background: #696969; display: grid; grid-template: 54px 452px 53px / 153px 245px 310px; row-gap: 20px; height: 599px; }
  .cell { line-height: 49px; }
  .head { grid-column: 1 / 4; padding-left: 153px; background: #46687d; line-height: 51px; }
  .p1 { grid-column: 2; background: #4c7c4e; }
  .p2 { grid-column: 3; background: #7e7465; padding-left: 1px; }
  .foot { grid-column: 1 / 4; padding-left: 153px; background: #815a61; }

  .modal {
    position: absolute; left: 536px; top: 282px; width: 1800px; height: 1238px; border: 2px solid #1b1b32; background: #f5f6f7;
    color: #1b1b32; font-family: "Roboto Mono", "DejaVu Sans Mono", monospace; box-shadow: 0 10px 30px rgba(0, 0, 0, .5);
    display: flex; flex-direction: column;
  }
  .mhead { height: 138px; padding: 0 35px 0 24px; border-bottom: 2px solid #1b1b32; display: flex; }
  .mhead h2 { flex: 1; padding-top: 34px; text-align: center; font-size: 54px; line-height: 64px; }
  .mhead svg { width: 26px; height: 26px; margin: 42px 0 0 0; }
  .mbody { height: 802px; border-bottom: 2px solid #1b1b32; display: flex; flex-direction: column; align-items: center; }
  .check { width: 382px; height: 382px; margin-top: 77px; }
  .mbody h3 { margin: 81px 2px 0 0; font-size: 43.200px; line-height: 60px; }
  .progress { width: 800px; height: 100px; margin-top: 30px; background: #0a0a23; color: #fff; font-size: 36px; line-height: 101px; text-align: center; }
  .mfoot { padding: 30px; display: grid; gap: 10px; }
  .mbtn { height: 112px; border: 6px solid #1b1b32; background: #d0d0d5; font-size: 46px; line-height: 100px; text-align: center; padding-right: 2px; }

  .dock {
    position: absolute; left: 321px; top: 1632px; width: 2239px; height: 180px; padding: 6px 0 0 5px; display: flex;
    border: 2px solid #363a44; border-radius: 12px; background: linear-gradient(#151a26, #181e30);
  }
  .slot { width: 144px; display: flex; flex-direction: column; align-items: center; }
  .slot svg { width: 144px; height: 144px; }
  .slot i { width: 8px; height: 8px; margin-top: 4px; border-radius: 50%; background: #9a9fb2; }
  .divider { width: 2px; height: 124px; margin: 14px 30px 0 32px; background: #4a4e5a; }
  .petals rect { mix-blend-mode: multiply; }
  .month { font: 23px Inter, sans-serif; fill: #fff; text-anchor: middle; letter-spacing: -1px; }
  .day { font: 300 62px Inter, sans-serif; fill: #2a2a2a; text-anchor: middle; }
</style>
